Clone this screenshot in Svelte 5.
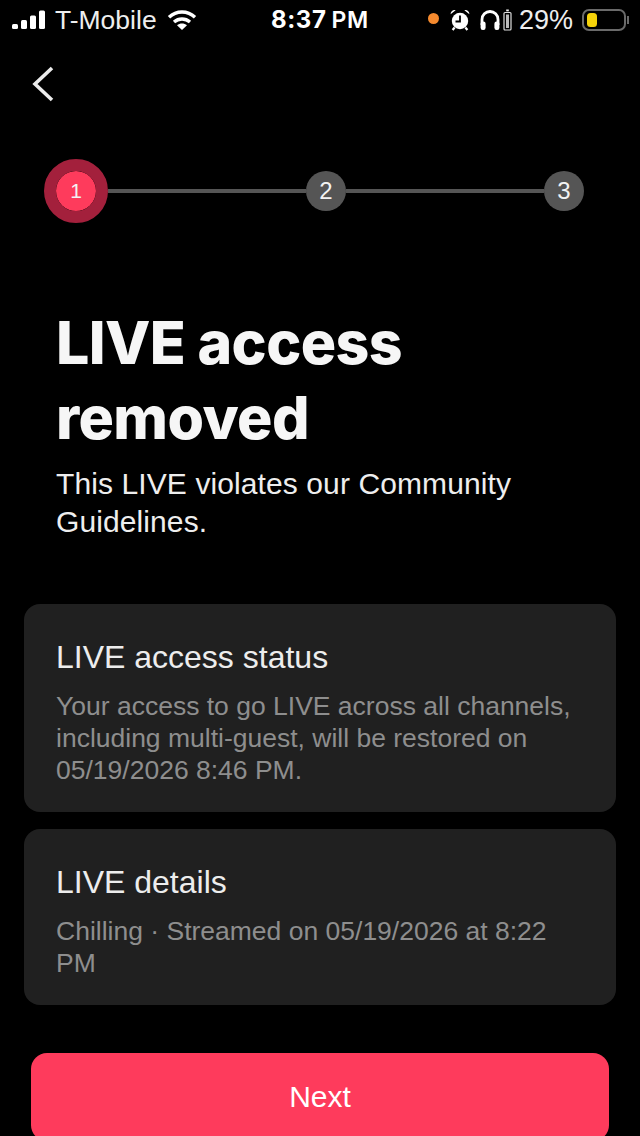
<script>
  const steps = [1, 2, 3];
</script>

<div class="screen">
  <header class="status">
    <div class="status-left">
      <svg class="signal" width="36" height="20" viewBox="0 0 36 20">
        <rect x="0" y="14" width="6" height="5" rx="1.5" />
        <rect x="9" y="10" width="6" height="9" rx="1.5" />
        <rect x="18" y="5.5" width="6" height="13.5" rx="1.5" />
        <rect x="27" y="0.5" width="6" height="18.5" rx="1.5" />
      </svg>
      <span class="carrier">T-Mobile</span>
      <svg class="wifi" width="30" height="22" viewBox="0 0 30 22" fill="none" stroke="#fff" stroke-width="3.4">
        <path d="M2 8.2C9.5 1.2 20.5 1.2 28 8.2" />
        <path d="M7 13C11.7 9 18.3 9 23 13" />
        <path d="M15 21l-5-4.8c2.9-2.2 7.1-2.2 10 0z" fill="#fff" stroke="none" />
      </svg>
    </div>
    <div class="clock">8:37<span class="pm">PM</span></div>
    <div class="status-right">
      <span class="dot"></span>
      <svg class="alarm" width="20" height="22" viewBox="0 0 20 22">
        <circle cx="10" cy="12" r="8.2" fill="#fff" />
        <path d="M10 6.5v6H5.5" fill="none" stroke="#000" stroke-width="1.8" />
        <path d="M0.6 5.2C0.6 2.4 3 0.6 5.6 1.2z M19.4 5.2C19.4 2.4 17 0.6 14.4 1.2z" fill="#fff" />
        <path d="M4.6 18.5L2.6 21 M15.4 18.5L17.4 21" stroke="#fff" stroke-width="2.2" fill="none" />
      </svg>
      <svg class="phones" width="20" height="22" viewBox="0 0 20 22" fill="none">
        <path d="M2 16V10.5a8 8 0 0 1 16 0V16" stroke="#fff" stroke-width="2.8" />
        <rect x="0.6" y="12.5" width="5" height="8.5" rx="2.2" fill="#fff" />
        <rect x="14.4" y="12.5" width="5" height="8.5" rx="2.2" fill="#fff" />
      </svg>
      <svg class="bud" width="9" height="22" viewBox="0 0 9 22" fill="none">
        <rect x="1" y="3.5" width="7" height="17.5" rx="1" stroke="#ddd" stroke-width="1.2" />
        <rect x="3" y="5.5" width="3" height="13.5" fill="#bbb" />
        <rect x="3.2" y="0.5" width="2.6" height="1.8" fill="#eee" />
      </svg>
      <span class="percent">29%</span>
      <div class="battery">
        <div class="battery-level"></div>
      </div>
      <span class="battery-cap"></span>
    </div>
  </header>

  <nav class="nav">
    <svg width="24" height="36" viewBox="0 0 24 36" fill="none" stroke="#ececec" stroke-width="3.6">
      <path d="M21 2 L4 18 L21 34" />
    </svg>
  </nav>

  <div class="stepper">
    {#each steps as step, i}
      {#if i > 0}<span class="line"></span>{/if}
      <span class="step" class:active={i === 0}>{step}</span>
    {/each}
  </div>

  <main class="content">
    <h1>LIVE access removed</h1>
    <p class="lead">This LIVE violates our Community Guidelines.</p>

    <section class="card first">
      <h2>LIVE access status</h2>
      <p>Your access to go LIVE across all channels, including multi-guest, will be restored on 05/19/2026 8:46 PM.</p>
    </section>

    <section class="card second">
      <h2>LIVE details</h2>
      <p>Chilling · Streamed on 05/19/2026 at 8:22 PM</p>
    </section>
  </main>

  <button class="next">Next</button>
</div>

<style>
  :global(body) {
    background: #000;
  }

  .screen {
    width: 640px;
    height: 1136px;
    overflow: hidden;
    background: #000;
    color: #fff;
    font-family: "Liberation Sans", Arial, sans-serif;
    display: flex;
    flex-direction: column;
  }

  .screen > * {
    flex: none;
  }

  .status {
    height: 40px;
    display: flex;
    align-items: center;
    position: relative;
    padding: 0 11px 0 12px;
    box-sizing: border-box;
    font-family: Inter, "Liberation Sans", sans-serif;
  }

  .status-left {
    display: flex;
    align-items: center;
    gap: 7px;
  }

  .signal {
    fill: #fff;
  }

  .carrier {
    font-size: 26.5px;
    color: #eee;
    margin-right: 3px;
    font-family: "Liberation Sans", sans-serif;
  }

  .clock {
    position: absolute;
    left: 271px;
    top: 6px;
    font-size: 24px;
    font-weight: 700;
    line-height: 28px;
    letter-spacing: 0.6px;
  }

  .pm {
    margin-left: 5px;
    font-size: 23px;
    font-weight: 600;
  }

  .status-right {
    margin-left: auto;
    display: flex;
    align-items: center;
  }

  .dot {
    width: 11px;
    height: 11px;
    border-radius: 50%;
    background: #f58a2e;
    margin-right: 11px;
    margin-bottom: 3px;
  }

  .alarm {
    margin-right: 10px;
  }

  .bud {
    margin-left: 3px;
    margin-right: 7px;
  }

  .percent {
    font-size: 27px;
    color: #eee;
    font-family: "Liberation Sans", sans-serif;
    margin-right: 9px;
  }

  .battery {
    width: 44px;
    height: 22px;
    box-sizing: border-box;
    border: 2px solid #6a6a6a;
    border-radius: 7px;
    padding: 2px 3px;
  }

  .battery-level {
    width: 10px;
    height: 14px;
    background: #f6d30a;
    border-radius: 3.5px;
  }

  .battery-cap {
    width: 2px;
    height: 8px;
    background: #6a6a6a;
    margin-left: 1px;
  }

  .nav {
    height: 40px;
    padding: 26px 0 0 31px;
  }

  .stepper {
    display: flex;
    align-items: center;
    margin: 53px 56px 0 44px;
    height: 64px;
  }

  .step {
    width: 40px;
    height: 40px;
    flex: none;
    border-radius: 50%;
    background: #555;
    font-size: 24px;
    display: flex;
    align-items: center;
    justify-content: center;
    color: #f2f2f2;
  }

  .step.active {
    background: #fe3b5c;
    border: 12px solid #a3203c;
    box-sizing: content-box;
    font-size: 21px;
    background-clip: padding-box;
  }

  .line {
    flex: 1;
    height: 4px;
    background: #555;
  }

  .content {
    padding: 0 24px;
    margin-top: 82px;
  }

  h1 {
    margin: 0 32px;
    font-family: Inter, "Liberation Sans", sans-serif;
    font-size: 59px;
    font-weight: 800;
    line-height: 75px;
    letter-spacing: -0.6px;
    color: #f6f6f6;
  }

  .lead {
    margin: 10px 32px 0;
    font-size: 30px;
    line-height: 38px;
    color: #eee;
    letter-spacing: 0.1px;
  }

  .card {
    background: #202020;
    border-radius: 16px;
    padding: 32px;
    box-sizing: border-box;
  }

  .card.first {
    margin-top: 63px;
    height: 208px;
  }

  .card.second {
    margin-top: 17px;
    height: 176px;
  }

  h2 {
    margin: 1px 0 13px;
    font-size: 32px;
    font-weight: 400;
    line-height: 40px;
    color: #ededed;
  }

  .card p {
    margin: 0;
    font-size: 26.5px;
    line-height: 32px;
    color: #8e8e8e;
  }

  .next {
    display: block;
    margin: 48px 0 0 31px;
    width: 578px;
    height: 88px;
    border: 0;
    border-radius: 16px;
    background: #fe3b5c;
    color: #fff;
    font-family: "Liberation Sans", sans-serif;
    font-size: 30px;
  }
</style>
